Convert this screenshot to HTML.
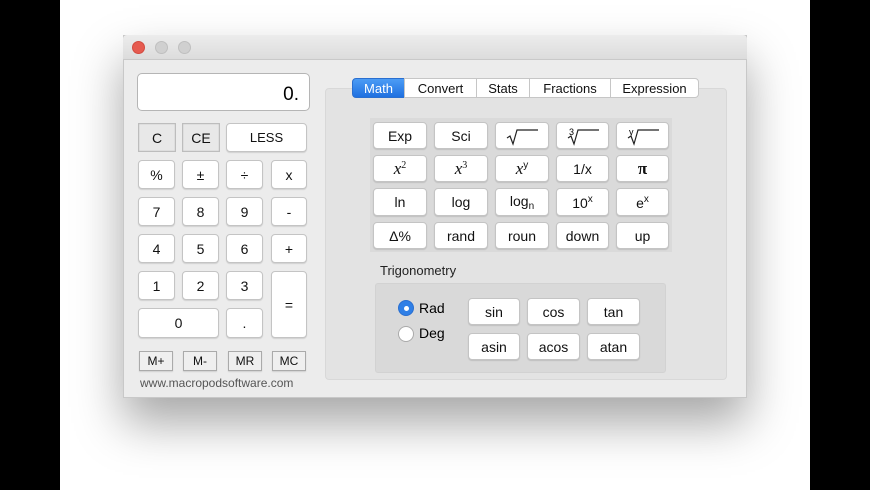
<!DOCTYPE html>
<html><head><style>
*{box-sizing:border-box;margin:0;padding:0}
body{width:870px;height:490px;background:#000;position:relative;font-family:"Liberation Sans",sans-serif;overflow:hidden}
#bg{position:absolute;left:60px;top:0;width:750px;height:490px;background:#fff}
#win{position:absolute;left:123px;top:35px;width:624px;height:363px;background:#ececec;border:1px solid #c8c8c8;box-shadow:0 25px 45px rgba(0,0,0,.35)}
#tb{position:absolute;left:0;top:0;width:100%;height:25px;background:linear-gradient(#ececec,#dcdcdc);border-bottom:1px solid #c9c9c9}
.dot{position:absolute;top:6px;width:13px;height:13px;border-radius:50%;background:#d0d0d0;border:1px solid #bfbfbf}
.b{position:absolute;background:#fff;border:1px solid #c4c4c4;border-radius:4px;box-shadow:0 1px 1px rgba(0,0,0,.12);display:flex;align-items:center;justify-content:center;font-size:14px;color:#111}
.s{background:#e8e8e8;border-radius:0;border:1px solid #bdbdbd;box-shadow:inset 0 0 1px #aaa}
.m{font-size:12px;background:#efefef;border-radius:0;border:1px solid #aaa}
.ser{font-family:"Liberation Serif",serif;font-style:italic;font-size:17px}
sup{font-size:10px;vertical-align:6px}
sub{font-size:10px;vertical-align:-3px}
#panel{position:absolute;left:325px;top:88px;width:402px;height:292px;background:#e3e3e3;border:1px solid #d8d8d8;border-radius:4px}
.tab{position:absolute;top:78px;height:20px;background:#fff;border:1px solid #c6c6c6;font-size:13px;display:flex;align-items:center;justify-content:center;color:#111}
</style></head><body>
<div id="bg"></div>
<div id="win" style="left:123px"></div>
<div style="position:absolute;left:123px;top:35px;width:624px;height:363px">
<div id="tb" style="border-radius:4px 4px 0 0"></div>
<div class="dot" style="left:9px;background:#e65b50;border-color:#d24b40"></div>
<div class="dot" style="left:32px"></div>
<div class="dot" style="left:55px"></div>
</div>
<div style="position:absolute;left:137px;top:73px;width:173px;height:38px;background:#fff;border:1px solid #b5b5b5;border-radius:5px;font-size:19px;text-align:right;padding:10px 10px 0 0">0.</div>
<div class="b s" style="left:138px;top:123px;width:38px;height:29px">C</div>
<div class="b s" style="left:182px;top:123px;width:38px;height:29px">CE</div>
<div class="b" style="left:226px;top:123px;width:81px;height:29px;font-size:13px">LESS</div>
<div class="b" style="left:138px;top:160px;width:37px;height:29px">%</div>
<div class="b" style="left:182px;top:160px;width:37px;height:29px">±</div>
<div class="b" style="left:226px;top:160px;width:37px;height:29px">÷</div>
<div class="b" style="left:271px;top:160px;width:36px;height:29px">x</div>
<div class="b" style="left:138px;top:197px;width:37px;height:29px">7</div>
<div class="b" style="left:182px;top:197px;width:37px;height:29px">8</div>
<div class="b" style="left:226px;top:197px;width:37px;height:29px">9</div>
<div class="b" style="left:271px;top:197px;width:36px;height:29px">-</div>
<div class="b" style="left:138px;top:234px;width:37px;height:29px">4</div>
<div class="b" style="left:182px;top:234px;width:37px;height:29px">5</div>
<div class="b" style="left:226px;top:234px;width:37px;height:29px">6</div>
<div class="b" style="left:271px;top:234px;width:36px;height:29px">+</div>
<div class="b" style="left:138px;top:271px;width:37px;height:29px">1</div>
<div class="b" style="left:182px;top:271px;width:37px;height:29px">2</div>
<div class="b" style="left:226px;top:271px;width:37px;height:29px">3</div>
<div class="b" style="left:271px;top:271px;width:36px;height:67px">=</div>
<div class="b" style="left:138px;top:308px;width:81px;height:30px">0</div>
<div class="b" style="left:226px;top:308px;width:37px;height:30px">.</div>
<div class="b m" style="left:139px;top:351px;width:34px;height:20px">M+</div>
<div class="b m" style="left:183px;top:351px;width:34px;height:20px">M-</div>
<div class="b m" style="left:228px;top:351px;width:34px;height:20px">MR</div>
<div class="b m" style="left:272px;top:351px;width:34px;height:20px">MC</div>
<div style="position:absolute;left:140px;top:376px;font-size:12px;color:#555">www.macropodsoftware.com</div>

<div id="panel"></div>
<div class="tab" style="left:352px;width:53px;background:linear-gradient(#4c9cf5,#1f70e0);color:#fff;border-color:#2a6fd0;border-radius:4px 0 0 4px">Math</div>
<div class="tab" style="left:404px;width:73px">Convert</div>
<div class="tab" style="left:476px;width:54px">Stats</div>
<div class="tab" style="left:529px;width:82px">Fractions</div>
<div class="tab" style="left:610px;width:89px;border-radius:0 4px 4px 0">Expression</div>

<div style="position:absolute;left:370px;top:118px;width:302px;height:134px;background:#dadada"></div>
<div class="b" style="left:373px;top:122px;width:54px;height:27px">Exp</div>
<div class="b" style="left:434px;top:122px;width:54px;height:27px">Sci</div>
<div class="b" style="left:495px;top:122px;width:54px;height:27px"><svg width="36" height="20"><path d="M3 12 L6 10 L9 18 L13 4 L34 4" fill="none" stroke="#222" stroke-width="1.2"/></svg></div>
<div class="b" style="left:556px;top:122px;width:53px;height:27px"><svg width="36" height="20"><text x="4" y="9" font-size="9" font-family="Liberation Sans">3</text><path d="M3 12 L6 10 L9 18 L13 4 L34 4" fill="none" stroke="#222" stroke-width="1.2"/></svg></div>
<div class="b" style="left:616px;top:122px;width:53px;height:27px"><svg width="36" height="20"><text x="4" y="9" font-size="9" font-family="Liberation Sans">y</text><path d="M3 12 L6 10 L9 18 L13 4 L34 4" fill="none" stroke="#222" stroke-width="1.2"/></svg></div>
<div class="b ser" style="left:373px;top:155px;width:54px;height:27px"><span>x<sup style="font-style:normal">2</sup></span></div>
<div class="b ser" style="left:434px;top:155px;width:54px;height:27px"><span>x<sup style="font-style:normal">3</sup></span></div>
<div class="b ser" style="left:495px;top:155px;width:54px;height:27px"><span>x<sup style="font-style:normal;font-family:'Liberation Sans'">y</sup></span></div>
<div class="b" style="left:556px;top:155px;width:53px;height:27px">1/x</div>
<div class="b ser" style="left:616px;top:155px;width:53px;height:27px;font-style:normal;font-weight:bold">π</div>
<div class="b" style="left:373px;top:188px;width:54px;height:28px">ln</div>
<div class="b" style="left:434px;top:188px;width:54px;height:28px">log</div>
<div class="b" style="left:495px;top:188px;width:54px;height:28px"><span>log<sub>n</sub></span></div>
<div class="b" style="left:556px;top:188px;width:53px;height:28px"><span>10<sup>x</sup></span></div>
<div class="b" style="left:616px;top:188px;width:53px;height:28px"><span>e<sup>x</sup></span></div>
<div class="b" style="left:373px;top:222px;width:54px;height:27px">Δ%</div>
<div class="b" style="left:434px;top:222px;width:54px;height:27px">rand</div>
<div class="b" style="left:495px;top:222px;width:54px;height:27px">roun</div>
<div class="b" style="left:556px;top:222px;width:53px;height:27px">down</div>
<div class="b" style="left:616px;top:222px;width:53px;height:27px">up</div>

<div style="position:absolute;left:380px;top:263px;font-size:13px;color:#222">Trigonometry</div>
<div style="position:absolute;left:375px;top:283px;width:291px;height:90px;background:#d9d9d9;border:1px solid #d2d2d2;border-radius:3px"></div>
<div style="position:absolute;left:398px;top:300px;width:16px;height:16px;border-radius:50%;background:#2f7fe6;border:1px solid #2a6fd0"><div style="position:absolute;left:5px;top:5px;width:5px;height:5px;border-radius:50%;background:#fff"></div></div>
<div style="position:absolute;left:419px;top:300px;font-size:14px">Rad</div>
<div style="position:absolute;left:398px;top:326px;width:16px;height:16px;border-radius:50%;background:#fff;border:1px solid #aaa"></div>
<div style="position:absolute;left:419px;top:325px;font-size:14px">Deg</div>
<div class="b" style="left:468px;top:298px;width:52px;height:27px">sin</div>
<div class="b" style="left:527px;top:298px;width:53px;height:27px">cos</div>
<div class="b" style="left:587px;top:298px;width:53px;height:27px">tan</div>
<div class="b" style="left:468px;top:333px;width:52px;height:27px">asin</div>
<div class="b" style="left:527px;top:333px;width:53px;height:27px">acos</div>
<div class="b" style="left:587px;top:333px;width:53px;height:27px">atan</div>
</body></html>
